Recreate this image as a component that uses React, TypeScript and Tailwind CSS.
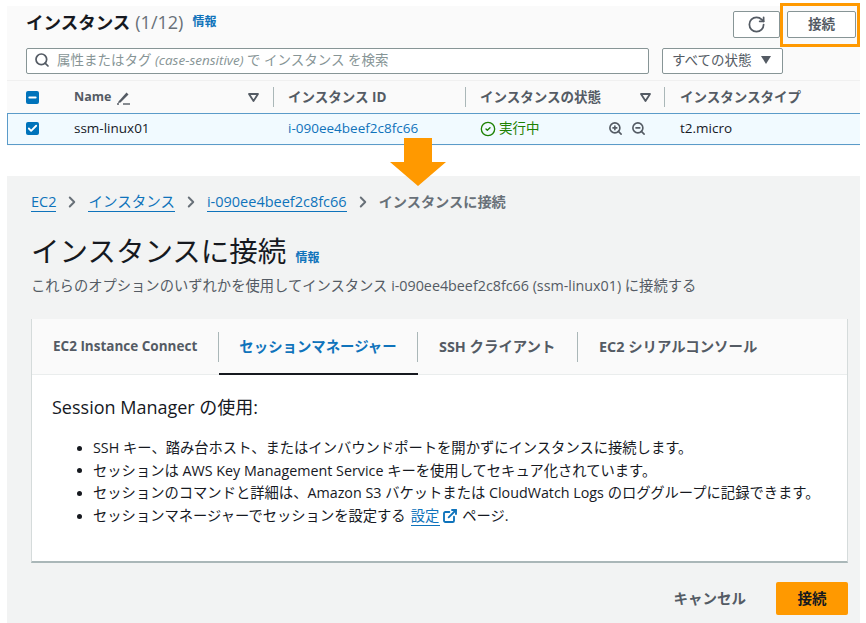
import { Search, RotateCw, ZoomIn, ZoomOut, ChevronRight, ExternalLink, Check, Minus, CircleCheck } from "lucide-react"

const font = { fontFamily: '"Open Sans", "Noto Sans CJK JP", sans-serif' }

function FilterIcon() {
  return (
    <svg width="11" height="9" viewBox="0 0 11 9" className="shrink-0">
      <path d="M1 1h9L5.5 8z" fill="none" stroke="#545b64" strokeWidth="1.8" strokeLinejoin="round" />
    </svg>
  )
}

function EditIcon() {
  return (
    <svg width="15" height="15" viewBox="0 0 15 15" className="ml-[5px] shrink-0">
      <path d="M2.5 11.5 10.5 2.5l2 2-8 8-2.5 .5z" fill="#545b64" />
      <path d="M7 14h7" stroke="#545b64" strokeWidth="1.4" />
      <path d="M1 14h2" stroke="#545b64" strokeWidth="1.4" />
    </svg>
  )
}

function Crumb({ children }: { children: React.ReactNode }) {
  return <a className="text-[#0f73bb] border-b border-[#0f73bb] leading-[18px]">{children}</a>
}

function Sep() {
  return <ChevronRight className="w-[18px] h-[18px] text-[#687078] mx-[7px]" strokeWidth={2.6} />
}

export default function App() {
  return (
    <div className="relative w-[866px] h-[623px] bg-white pt-[6px] pl-[7px] pr-[6px] flex flex-col overflow-hidden" style={font}>
      {/* instances table */}
      <div className="h-[140px] bg-[#fafafa] flex flex-col shrink-0">
        <div className="h-[42px] pl-[19px] pr-[4px] flex items-start justify-between">
          <div className="flex items-center">
            <span className="text-[17.5px] font-bold text-[#16191f] leading-[32px]">インスタンス</span>
            <span className="text-[18px] text-[#687078] ml-[5px]">(1/12)</span>
            <span className="text-[12px] font-bold text-[#0f73bb] ml-[9px]">情報</span>
          </div>
          <div className="flex items-center mt-[5px]">
            <button className="w-[47px] h-[27px] bg-white border border-[#879596] rounded-[2px] flex items-center justify-center">
              <RotateCw className="w-[19px] h-[19px] text-[#545b64]" strokeWidth={2.2} />
            </button>
            <button className="ml-[7px] w-[69px] h-[27px] bg-white border border-[#879596] rounded-[2px] text-[13.5px] font-bold text-[#545b64]">
              接続
            </button>
          </div>
        </div>
        <div className="flex items-center pl-[19px] h-[26px]">
          <div className="w-[623px] h-[26px] bg-white border border-[#879596] rounded-[2px] flex items-center pl-[7px] pb-[2px]">
            <Search className="w-[16px] h-[16px] text-[#545b64] mr-[7px]" strokeWidth={2.6} />
            <span className="text-[13.5px] text-[#879596]">
              属性またはタグ <em className="italic">(case-sensitive)</em> で インスタンス を検索
            </span>
          </div>
          <div className="ml-[13px] w-[121px] h-[26px] bg-white border border-[#879596] rounded-[2px] flex items-center justify-between pl-[9px] pr-[10px] pb-[2px]">
            <span className="text-[13.5px] text-[#545b64]">すべての状態</span>
            <svg width="12" height="8" viewBox="0 0 12 8">
              <path d="M1 0h10L6 8z" fill="#545b64" />
            </svg>
          </div>
        </div>
        <div className="mt-[6px] h-[33px] border-t border-[#f0f0f0] flex items-center text-[13.5px] font-bold text-[#545b64]">
          <div className="w-[67px] pl-[19px] shrink-0 flex">
            <span className="w-[13px] h-[13px] bg-[#0073bb] rounded-[2px] flex items-center justify-center">
              <Minus className="w-[11px] h-[11px] text-white" strokeWidth={4} />
            </span>
          </div>
          <div className="w-[214px] shrink-0 flex items-center relative h-[20px]">
            <span className="text-[12.5px]">Name</span>
            <EditIcon />
            <span className="ml-auto mr-[14px]"><FilterIcon /></span>
            <span className="w-px h-[20px] bg-[#aab7b8] mr-[14px]" />
          </div>
          <div className="w-[192px] shrink-0 flex items-center h-[20px]">
            <span>インスタンス ID</span>
            <span className="ml-auto mr-[14px] w-px h-[20px] bg-[#aab7b8]" />
          </div>
          <div className="w-[200px] shrink-0 flex items-center h-[20px]">
            <span>インスタンスの状態</span>
            <span className="ml-auto mr-[13px]"><FilterIcon /></span>
            <span className="w-px h-[20px] bg-[#aab7b8] mr-[15px]" />
          </div>
          <span>インスタンスタイプ</span>
        </div>
        <div className="h-[32px] bg-[#f1faff] border-y border-[#5b9bc9] border-l flex items-center pb-px text-[13.5px] text-[#16191f]">
          <div className="w-[66px] pl-[18px] shrink-0 flex">
            <span className="w-[13px] h-[13px] bg-[#0073bb] rounded-[2px] flex items-center justify-center">
              <Check className="w-[11px] h-[11px] text-white" strokeWidth={4} />
            </span>
          </div>
          <div className="w-[214px] shrink-0">ssm-linux01</div>
          <div className="w-[192px] shrink-0 text-[#0f73bb]">i-090ee4beef2c8fc66</div>
          <div className="w-[200px] shrink-0 flex items-center">
            <CircleCheck className="w-[16px] h-[16px] text-[#1d8102]" strokeWidth={2} />
            <span className="ml-[3px] text-[#1d8102]">実行中</span>
            <ZoomIn className="w-[15px] h-[15px] ml-[68px] text-[#545b64]" strokeWidth={2.6} />
            <ZoomOut className="w-[15px] h-[15px] ml-[8px] text-[#545b64]" strokeWidth={2.6} />
          </div>
          <span>t2.micro</span>
        </div>
      </div>

      {/* connect page */}
      <div className="mt-[30px] flex-1 bg-[#f2f3f3] flex flex-col pl-[24px] pr-[12px]">
        <div className="mt-[16px] flex items-center h-[20px] text-[14.5px] text-[#545b64]">
          <Crumb>EC2</Crumb>
          <Sep />
          <Crumb>インスタンス</Crumb>
          <Sep />
          <Crumb>i-090ee4beef2c8fc66</Crumb>
          <Sep />
          <span className="font-semibold text-[#687078] text-[14.2px]">インスタンスに接続</span>
        </div>
        <div className="mt-[16px] flex items-end h-[44px]">
          <h1 className="text-[28.5px] leading-[42px] text-[#16191f]">インスタンスに接続</h1>
          <span className="ml-[9px] mb-[5px] text-[12px] font-bold text-[#0f73bb]">情報</span>
        </div>
        <p className="mt-[4px] text-[14.3px] leading-[20px] text-[#545b64]">
          これらのオプションのいずれかを使用してインスタンス i-090ee4beef2c8fc66 (ssm-linux01) に接続する
        </p>
        <div className="mt-[23px] h-[244px] bg-white border-l border-r border-[#d5dbdb] border-b-2 border-b-[#aab7b8] flex flex-col">
          <div className="h-[56px] bg-[#fafafa] border-b border-[#eaeded] flex items-center text-[14.4px] font-bold text-[#545b64] shrink-0 relative">
            <div className="w-[186px] pl-[21px] text-[13.5px]">EC2 Instance Connect</div>
            <div className="w-[200px] h-[30px] border-x border-[#aab7b8] flex items-center justify-center text-[#0f73bb] font-semibold">
              セッションマネージャー
            </div>
            <div className="w-[160px] h-[30px] border-r border-[#aab7b8] flex items-center pl-[21px]">SSH クライアント</div>
            <div className="pl-[21px]">EC2 シリアルコンソール</div>
            <span className="absolute left-[187px] -bottom-px w-[199px] h-[2px] bg-[#16191f]" />
          </div>
          <div className="pl-[20px] pt-[20px]">
            <h2 className="text-[18px] leading-[24px] text-[#16191f]">Session Manager の使用:</h2>
            <ul className="mt-[18px] pl-[25px] list-none text-[14.3px] leading-[22.6px] text-[#16191f]">
              {[
                "SSH キー、踏み台ホスト、またはインバウンドポートを開かずにインスタンスに接続します。",
                "セッションは AWS Key Management Service キーを使用してセキュア化されています。",
                "セッションのコマンドと詳細は、Amazon S3 バケットまたは CloudWatch Logs のロググループに記録できます。",
              ].map((t) => (
                <li key={t} className="flex items-center whitespace-nowrap">
                  <span className="w-[5px] h-[5px] rounded-full bg-[#16191f] mr-[11px] shrink-0" />
                  {t}
                </li>
              ))}
              <li className="flex items-center whitespace-nowrap">
                <span className="w-[5px] h-[5px] rounded-full bg-[#16191f] mr-[11px] shrink-0" />
                セッションマネージャーでセッションを設定する
                <a className="ml-[5px] text-[#0f73bb] border-b border-[#0f73bb] leading-[18px] pr-[1px]">設定</a>
                <ExternalLink className="ml-[2px] w-[16px] h-[16px] text-[#0f73bb]" strokeWidth={2.8} />
                <span className="ml-[4px]">ページ.</span>
              </li>
            </ul>
          </div>
        </div>
        <div className="mt-[19px] flex items-center justify-end">
          <span className="text-[14.5px] font-bold text-[#545b64] mr-[30px]">キャンセル</span>
          <button className="w-[72px] h-[33px] bg-[#ff9900] rounded-[2px] text-[14.5px] font-bold text-[#16191f]">接続</button>
        </div>
      </div>

      {/* callouts */}
      <div className="absolute left-[780px] top-[3px] w-[80px] h-[44px] border-[3px] border-[#ff9900]" />
      <svg className="absolute left-[390px] top-[138px]" width="56" height="48" viewBox="0 0 56 48">
        <path d="M14 0h28v24h14L28 48 0 24h14z" fill="#ff9900" />
      </svg>
    </div>
  )
}
